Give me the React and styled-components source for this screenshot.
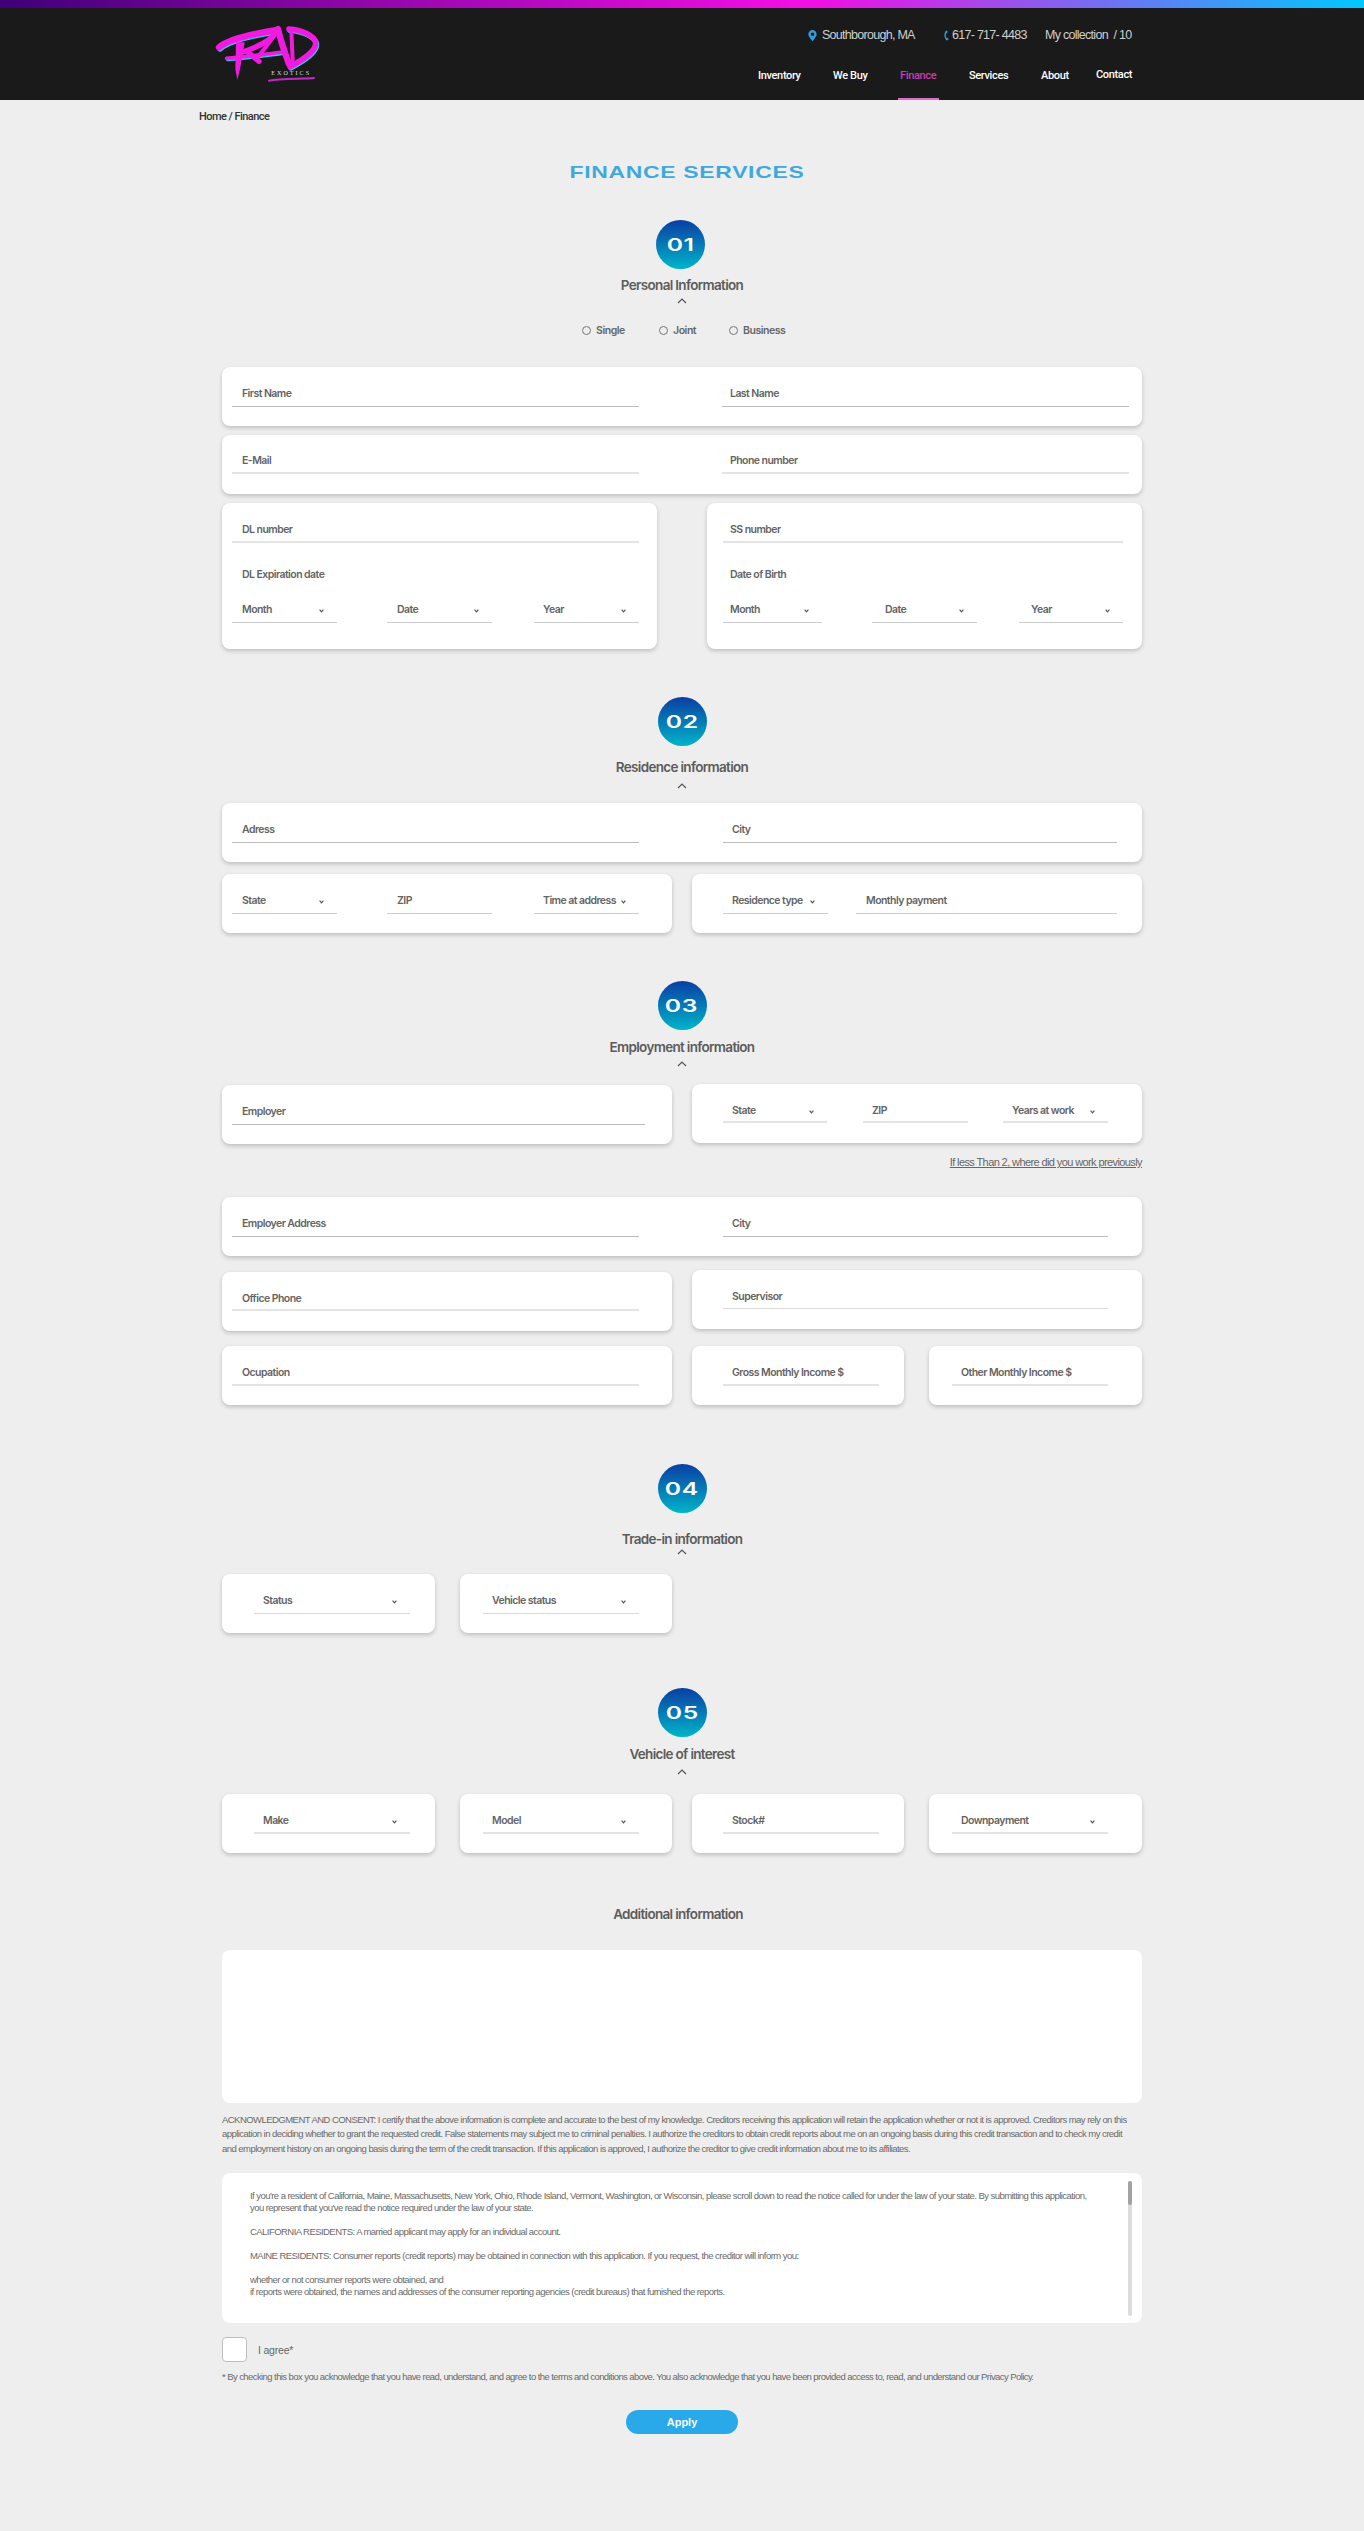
import React from 'react'
import styled, { createGlobalStyle } from 'styled-components'
import { FaMapMarkerAlt } from 'react-icons/fa'

const GlobalStyle = createGlobalStyle`
  html, body {
    margin: 0;
    padding: 0;
    background: #eeeeee;
    font-family: "Inter", "Liberation Sans", sans-serif;
  }
  * { box-sizing: border-box; }
`

const Logo = () => (
  <LogoSvg viewBox="0 0 324 186">
    <g fill="none" stroke="#35c4e8" strokeLinecap="round" strokeLinejoin="round" transform="translate(3 4)">
      <path d="M15 70 C45 45 110 30 190 18" strokeWidth="18" />
      <path d="M38 103 C90 98 150 92 205 84" strokeWidth="10" />
      <path d="M225 15 C265 18 300 35 305 55 C308 80 270 105 228 128" strokeWidth="16" />
    </g>
    <g fill="none" stroke="#f21ae0" strokeLinecap="round" strokeLinejoin="round">
      <path d="M15 70 C45 45 110 30 190 18" strokeWidth="19" />
      <path d="M190 22 C170 50 130 70 80 86" strokeWidth="16" />
      <path d="M38 103 C90 98 150 92 205 84" strokeWidth="11" />
      <path d="M100 84 C115 95 125 105 135 112" strokeWidth="16" />
      <path d="M192 18 C170 50 150 78 130 100" strokeWidth="12" />
      <path d="M192 15 C200 50 212 85 224 118" strokeWidth="19" />
      <path d="M225 15 C265 18 300 35 305 55 C308 80 270 105 228 128" strokeWidth="17" />
      <path d="M232 18 L236 110" strokeWidth="12" />
    </g>
    <path d="M66 55 L92 55 L78 135 L70 168 L64 135 Z" fill="#f21ae0" />
    <text x="172" y="153" fill="#dddddd" fontFamily="Liberation Serif, serif" fontSize="18" textLength="113">EXOTICS</text>
    <path d="M165 170 C200 164 260 165 300 162" fill="none" stroke="#c428c8" strokeWidth="6" strokeLinecap="round" />
  </LogoSvg>
)

const PhoneGlyph = () => (
  <svg width="6" height="11" viewBox="0 0 6 11">
    <path d="M3.2 0.6 C1 3 0.6 7 3.6 10.4 L5.6 9.4 L4.4 7.6 L3.4 8 C2.6 6.4 2.6 4.4 3.2 3.2 L4.2 3.2 L4.4 1 Z" fill="#2f9fdc" />
  </svg>
)

const Caret = () => (
  <CaretSvg width="5" height="4" viewBox="0 0 5 4">
    <path d="M0.6 0.7 L2.5 2.9 L4.4 0.7" fill="none" stroke="#555" strokeWidth="1.2" />
  </CaretSvg>
)

const Up = () => (
  <UpSvg width="10" height="6" viewBox="0 0 10 6">
    <path d="M1 5 L5 1 L9 5" fill="none" stroke="#555" strokeWidth="1.2" />
  </UpSvg>
)

const Field = ({ label, w, ml, pad, tone, select, h }) => (
  <FieldBox $w={w} $ml={ml} $pad={pad} $tone={tone} $h={h}>
    <span>{label}</span>
    {select && <Caret />}
  </FieldBox>
)

const Head = ({ n, title, shift, titleTop, upTop }) => (
  <HeadBox>
    <Circle $shift={shift}><span>{n}</span></Circle>
    <SectionTitle $top={titleTop}>{title}</SectionTitle>
    <UpRow $top={upTop}><Up /></UpRow>
  </HeadBox>
)

const App = () => (
  <>
    <GlobalStyle />
    <TopStrip />
    <Header>
      <Logo />
      <HeaderRight>
        <InfoRow>
          <InfoItem $w={136}><Pin><FaMapMarkerAlt size={11} /></Pin>Southborough, MA</InfoItem>
          <InfoItem $w={102}><PhoneGlyph />617- 717- 4483</InfoItem>
          <InfoItem $w={91}>My collection&nbsp; / 10</InfoItem>
        </InfoRow>
        <Nav>
          <NavItem $w={75}>Inventory</NavItem>
          <NavItem $w={67}>We Buy</NavItem>
          <NavItem $w={69} $active>Finance</NavItem>
          <NavItem $w={72}>Services</NavItem>
          <NavItem $w={55}>About</NavItem>
          <NavItem $w={38} $up>Contact</NavItem>
        </Nav>
      </HeaderRight>
    </Header>
    <Crumbs>Home / Finance</Crumbs>
    <PageTitle><span>FINANCE SERVICES</span></PageTitle>

    <Main>
      <Head n="01" title="Personal Information" shift={-3} titleTop={6} upTop={0} />
      <Radios>
        <RadioItem $w={77}><Radio />Single</RadioItem>
        <RadioItem $w={70}><Radio />Joint</RadioItem>
        <RadioItem $w={53}><Radio />Business</RadioItem>
      </Radios>
      <Stack $gap={9} $top={27}>
        <Card $left={10}>
          <Field label="First Name" w={407} tone="dark" />
          <Field label="Last Name" w={407} ml={83} pad={8} tone="dark" />
        </Card>
        <Card $left={10} $pt={16}>
          <Field label="E-Mail" w={407} tone="thick" />
          <Field label="Phone number" w={407} ml={83} pad={8} tone="thick" />
        </Card>
        <Row $gap={50}>
          <TallCard $w={435} $left={10}>
            <Field label="DL number" w={407} tone="thick" />
            <DateLabel $pad={10}>DL Expiration date</DateLabel>
            <FieldRow>
              <Field label="Month" w={105} select />
              <Field label="Date" w={105} ml={50} select />
              <Field label="Year" w={105} ml={42} pad={9} select />
            </FieldRow>
          </TallCard>
          <TallCard $w={435} $left={16}>
            <Field label="SS number" w={400} pad={7} tone="thick" />
            <DateLabel $pad={7}>Date of Birth</DateLabel>
            <FieldRow>
              <Field label="Month" w={99} pad={7} select />
              <Field label="Date" w={105} ml={50} pad={13} select />
              <Field label="Year" w={104} ml={42} pad={12} select />
            </FieldRow>
          </TallCard>
        </Row>
      </Stack>

      <Spacer $h={48} />
      <Head n="02" title="Residence information" titleTop={11} upTop={3} />
      <Stack $gap={12} $top={11}>
        <Card $left={10}>
          <Field label="Adress" w={407} tone="dark" />
          <Field label="City" w={394} ml={84} pad={9} tone="dark" />
        </Card>
        <Row $gap={20}>
          <Card $w={450} $left={10}>
            <Field label="State" w={105} select />
            <Field label="ZIP" w={105} ml={50} />
            <Field label="Time at address" w={105} ml={42} pad={9} select />
          </Card>
          <Card $w={450} $left={31}>
            <Field label="Residence type" w={105} pad={9} select />
            <Field label="Monthly payment" w={261} ml={28} />
          </Card>
        </Row>
      </Stack>

      <Spacer $h={48} />
      <Head n="03" title="Employment information" titleTop={7} upTop={1} />
      <Stack $gap={0} $top={14}>
        <Row $gap={20} $start>
          <Card $w={450} $left={10} $mt={1}>
            <Field label="Employer" w={413} tone="dark" />
          </Card>
          <Card $w={450} $left={31}>
            <Field label="State" w={104} pad={9} h={22} select tone="thick" />
            <Field label="ZIP" w={105} ml={36} pad={9} h={22} tone="thick" />
            <Field label="Years at work" w={105} ml={35} pad={9} h={22} select tone="thick" />
          </Card>
        </Row>
        <NoteLink>If less Than 2, where did you work previously</NoteLink>
        <Card $left={10}>
          <Field label="Employer Address" w={407} tone="dark" />
          <Field label="City" w={385} ml={84} pad={9} tone="dark" />
        </Card>
        <Row $gap={20} $start $top={14}>
          <Card $w={450} $left={10} $mt={2}>
            <Field label="Office Phone" w={407} h={22} tone="thick" />
          </Card>
          <Card $w={450} $left={31}>
            <Field label="Supervisor" w={385} pad={9} h={22} tone="soft" />
          </Card>
        </Row>
        <Row $gap={20} $top={15}>
          <Card $w={450} $left={10}>
            <Field label="Ocupation" w={407} tone="thick" />
          </Card>
          <Row $gap={25}>
            <Card $w={212} $left={31}>
              <Field label="Gross Monthly Income $" w={156} pad={9} tone="thick" />
            </Card>
            <Card $w={213} $left={23}>
              <Field label="Other Monthly Income $" w={156} pad={9} tone="thick" />
            </Card>
          </Row>
        </Row>
      </Stack>

      <Spacer $h={59} />
      <Head n="04" title="Trade-in information" titleTop={16} upTop={-3} />
      <Stack $gap={0} $top={16}>
        <Row $gap={25}>
          <Card $w={213} $left={32}>
            <Field label="Status" w={156} pad={9} select tone="soft" />
          </Card>
          <Card $w={212} $left={23}>
            <Field label="Vehicle status" w={156} pad={9} select tone="soft" />
          </Card>
        </Row>
      </Stack>

      <Spacer $h={55} />
      <Head n="05" title="Vehicle of interest" titleTop={7} upTop={2} />
      <Stack $gap={0} $top={16}>
        <Row $gap={25}>
          <Card $w={213} $left={32}>
            <Field label="Make" w={156} pad={9} select tone="thick" />
          </Card>
          <Card $w={212} $left={23}>
            <Field label="Model" w={156} pad={9} select tone="thick" />
          </Card>
          <Card $w={212} $ml={-5} $left={31}>
            <Field label="Stock#" w={156} pad={9} tone="thick" />
          </Card>
          <Card $w={213} $left={23}>
            <Field label="Downpayment" w={156} pad={9} select tone="thick" />
          </Card>
        </Row>
      </Stack>

      <AdditionalTitle>Additional information</AdditionalTitle>
      <TextBox />

      <Consent>
        ACKNOWLEDGMENT AND CONSENT: I certify that the above information is complete and accurate to the best of my knowledge. Creditors receiving this application will retain the application whether or not it is approved. Creditors may rely on this<br />
        application in deciding whether to grant the requested credit. False statements may subject me to criminal penalties. I authorize the creditors to obtain credit reports about me on an ongoing basis during this credit transaction and to check my credit<br />
        and employment history on an ongoing basis during the term of the credit transaction. If this application is approved, I authorize the creditor to give credit information about me to its affiliates.
      </Consent>

      <LegalBox>
        <LegalText>
          If you're a resident of California, Maine, Massachusetts, New York, Ohio, Rhode Island, Vermont, Washington, or Wisconsin, please scroll down to read the notice called for under the law of your state. By submitting this application,<br />
          you represent that you've read the notice required under the law of your state.
        </LegalText>
        <LegalText>CALIFORNIA RESIDENTS: A married applicant may apply for an individual account.</LegalText>
        <LegalText>MAINE RESIDENTS: Consumer reports (credit reports) may be obtained in connection with this application. If you request, the creditor will inform you:</LegalText>
        <LegalText>
          whether or not consumer reports were obtained, and<br />
          if reports were obtained, the names and addresses of the consumer reporting agencies (credit bureaus) that furnished the reports.
        </LegalText>
        <Track><Thumb /></Track>
      </LegalBox>

      <AgreeRow>
        <Checkbox />
        <AgreeLabel>I agree*</AgreeLabel>
      </AgreeRow>
      <Footnote>* By checking this box you acknowledge that you have read, understand, and agree to the terms and conditions above. You also acknowledge that you have been provided access to, read, and understand our Privacy Policy.</Footnote>
      <ApplyRow>
        <Apply>Apply</Apply>
      </ApplyRow>
    </Main>
  </>
)

export default App

const LogoSvg = styled.svg`
  width: 108px;
  height: 62px;
  margin-top: 16px;
  flex: none;
`

const TopStrip = styled.div`
  height: 8px;
  background: linear-gradient(90deg, #3f0078 0%, #f00fe4 58%, #f00fe4 60%, #00c8ff 100%);
`

const Header = styled.header`
  height: 92px;
  background: #1a1a1a;
  padding-left: 214px;
  display: flex;
`

const HeaderRight = styled.div`
  width: 376px;
  margin-left: 436px;
`

const InfoRow = styled.div`
  display: flex;
  padding-left: 49px;
  margin-top: 18px;
  height: 18px;
`

const InfoItem = styled.div`
  width: ${p => p.$w}px;
  display: flex;
  align-items: center;
  gap: 3px;
  flex: none;
  color: #cfcfcf;
  font-family: "Liberation Sans", sans-serif;
  font-size: 12.5px;
  letter-spacing: -0.72px;
  white-space: nowrap;
`

const Pin = styled.span`
  display: flex;
  color: #2f9fdc;
  margin-right: 1px;
`

const Nav = styled.nav`
  display: flex;
  margin-top: 24px;
`

const NavItem = styled.div`
  position: relative;
  width: ${p => p.$w}px;
  flex: none;
  height: 16px;
  line-height: 16px;
  color: ${p => (p.$active ? '#c93db0' : '#ffffff')};
  font-family: "Roboto", sans-serif;
  font-size: 11px;
  font-weight: 500;
  letter-spacing: -0.35px;
  white-space: nowrap;
  margin-top: ${p => (p.$up ? '-1px' : '0')};
  ${p => p.$active && `
    &::after {
      content: "";
      position: absolute;
      left: -2px;
      width: 41px;
      top: 30px;
      height: 2px;
      background: #d96fc8;
    }
  `}
`

const Crumbs = styled.div`
  padding: 9px 0 0 199px;
  height: 24px;
  line-height: 16px;
  font-family: "Roboto", sans-serif;
  font-size: 11px;
  font-weight: 500;
  letter-spacing: -0.55px;
  color: #333;
`

const PageTitle = styled.h1`
  margin: 37px 0 0 10px;
  height: 24px;
  line-height: 24px;
  text-align: center;
  font-family: "Liberation Sans", sans-serif;
  font-size: 17px;
  font-weight: 700;
  color: #3fa9de;
  letter-spacing: 0.5px;

  span {
    display: inline-block;
    transform: scaleX(1.35);
  }
`

const Main = styled.main`
  width: 920px;
  margin: 35px auto 0;
  padding-bottom: 96px;
`

const HeadBox = styled.div`
  display: flex;
  flex-direction: column;
  align-items: center;
`

const Circle = styled.div`
  width: 49px;
  height: 49px;
  border-radius: 50%;
  margin-left: ${p => p.$shift || 0}px;
  background: linear-gradient(180deg, #0a3fa3 0%, #00b4c8 100%);
  color: #fff;
  display: flex;
  align-items: center;
  justify-content: center;
  font-family: "Inter", sans-serif;
  font-size: 17px;
  font-weight: 600;

  span {
    display: inline-block;
    transform: scaleX(1.45);
    letter-spacing: 0.5px;
  }
`

const SectionTitle = styled.h2`
  margin: ${p => p.$top}px 0 0;
  height: 20px;
  line-height: 20px;
  font-family: "Inter", sans-serif;
  font-size: 13.5px;
  font-weight: 600;
  letter-spacing: -0.68px;
  color: #5c5c5c;
`

const UpRow = styled.div`
  margin-top: ${p => p.$top}px;
  height: 12px;
  display: flex;
  align-items: center;
`

const UpSvg = styled.svg`
  display: block;
`

const Radios = styled.div`
  width: 200px;
  height: 20px;
  margin: 13px auto 0;
  display: flex;
`

const RadioItem = styled.div`
  width: ${p => p.$w}px;
  flex: none;
  display: flex;
  align-items: center;
  gap: 5px;
  font-family: "Inter", sans-serif;
  font-size: 10.5px;
  font-weight: 600;
  letter-spacing: -0.45px;
  color: #666;
  white-space: nowrap;
`

const Radio = styled.span`
  width: 9px;
  height: 9px;
  border: 1px solid #777;
  border-radius: 50%;
  flex: none;
`

const Stack = styled.div`
  margin-top: ${p => p.$top}px;
  display: flex;
  flex-direction: column;
  gap: ${p => p.$gap}px;
`

const Row = styled.div`
  display: flex;
  gap: ${p => p.$gap}px;
  margin-top: ${p => p.$top || 0}px;
  align-items: ${p => (p.$start ? 'flex-start' : 'stretch')};
`

const Card = styled.div`
  width: ${p => (p.$w ? `${p.$w}px` : '100%')};
  height: 59px;
  flex: none;
  margin-top: ${p => p.$mt || 0}px;
  margin-left: ${p => p.$ml || 0}px;
  padding: ${p => p.$pt || 17}px 0 0 ${p => p.$left}px;
  background: #fff;
  border-radius: 8px;
  box-shadow: 0 2px 4px rgba(0, 0, 0, 0.2);
  display: flex;
  align-items: flex-start;
`

const TallCard = styled(Card)`
  height: 146px;
  display: block;
`

const tones = {
  dark: 'border-bottom: 1px solid #bcbcbc;',
  soft: 'border-bottom: 1px solid #dadada;',
  thick: 'border-bottom: 2px solid #e4e4e4;',
  plain: 'border-bottom: 1px solid #cccccc;',
}

const FieldBox = styled.div`
  width: ${p => p.$w}px;
  height: ${p => p.$h || 23}px;
  flex: none;
  margin-left: ${p => p.$ml || 0}px;
  padding: 0 13px 0 ${p => (p.$pad === undefined ? 10 : p.$pad)}px;
  display: flex;
  justify-content: space-between;
  align-items: flex-start;
  ${p => tones[p.$tone || 'plain']}

  span {
    line-height: 20px;
    font-family: "Inter", sans-serif;
    font-size: 10.5px;
    font-weight: 600;
    letter-spacing: -0.55px;
    color: #646464;
    white-space: nowrap;
  }
`

const CaretSvg = styled.svg`
  flex: none;
  margin-top: 9px;
`

const DateLabel = styled.div`
  margin-top: 22px;
  padding-left: ${p => p.$pad}px;
  height: 20px;
  line-height: 20px;
  font-family: "Inter", sans-serif;
  font-size: 10.5px;
  font-weight: 600;
  letter-spacing: -0.55px;
  color: #646464;
`

const FieldRow = styled.div`
  display: flex;
  margin-top: 15px;
`

const Spacer = styled.div`
  height: ${p => p.$h}px;
`

const NoteLink = styled.div`
  margin: 8px 0 25px;
  height: 20px;
  line-height: 20px;
  text-align: right;
  font-family: "Liberation Sans", sans-serif;
  font-size: 11px;
  letter-spacing: -0.6px;
  text-decoration: underline;
  color: #666;
`

const AdditionalTitle = styled(SectionTitle)`
  margin: 51px 0 0;
  text-align: center;
  padding-right: 8px;
`

const TextBox = styled.div`
  margin-top: 26px;
  height: 153px;
  background: #fff;
  border-radius: 8px;
`

const Consent = styled.p`
  margin: 10px 0 0;
  font-family: "Liberation Sans", sans-serif;
  font-size: 9.5px;
  line-height: 14.4px;
  letter-spacing: -0.54px;
  color: #6a6a6a;
  white-space: nowrap;
`

const LegalBox = styled.div`
  position: relative;
  margin-top: 17px;
  height: 150px;
  padding: 17px 0 0 28px;
  background: #fff;
  border-radius: 8px;
`

const LegalText = styled.p`
  margin: 0 0 12px;
  font-family: "Liberation Sans", sans-serif;
  font-size: 9.5px;
  line-height: 12px;
  letter-spacing: -0.55px;
  color: #6a6a6a;
  white-space: nowrap;
`

const Track = styled.div`
  position: absolute;
  top: 8px;
  right: 10px;
  bottom: 7px;
  width: 4px;
  background: #dcdcdc;
  border-radius: 2px;
`

const Thumb = styled.div`
  height: 24px;
  background: #a2a2a2;
  border-radius: 2px;
`

const AgreeRow = styled.div`
  margin-top: 14px;
  display: flex;
  align-items: center;
  gap: 11px;
`

const Checkbox = styled.div`
  width: 25px;
  height: 25px;
  background: #fff;
  border: 1px solid #bdbdbd;
  border-radius: 4px;
`

const AgreeLabel = styled.div`
  font-family: "Liberation Sans", sans-serif;
  font-size: 10.5px;
  letter-spacing: -0.2px;
  color: #666;
`

const Footnote = styled.div`
  margin-top: 7px;
  height: 16px;
  line-height: 16px;
  font-family: "Liberation Sans", sans-serif;
  font-size: 9.5px;
  letter-spacing: -0.58px;
  color: #6a6a6a;
  white-space: nowrap;
`

const ApplyRow = styled.div`
  margin-top: 25px;
  display: flex;
  justify-content: center;
`

const Apply = styled.button`
  width: 112px;
  height: 24px;
  border: 0;
  border-radius: 12px;
  background: #29a9ea;
  color: #fff;
  font-family: "Liberation Sans", sans-serif;
  font-size: 11px;
  font-weight: 700;
`
